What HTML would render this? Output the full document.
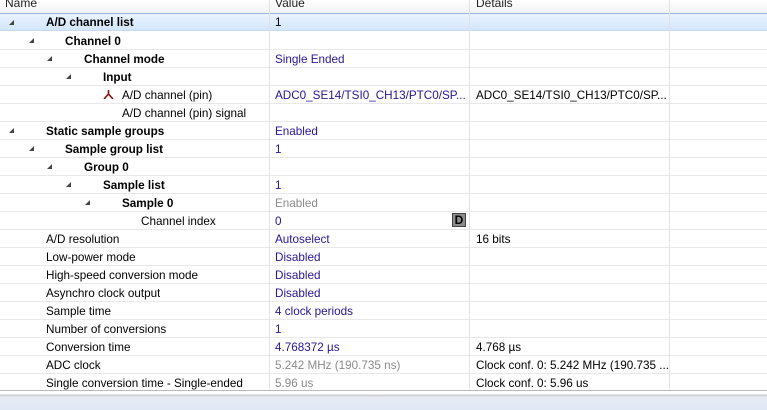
<!DOCTYPE html><html><head><style>
body{margin:0;width:767px;height:409px;overflow:hidden;background:#fff;font-family:"Liberation Sans",sans-serif;font-size:11.7px;color:#000;position:relative}
.h{position:absolute;top:0;left:0;width:767px;height:13px;background:linear-gradient(#fff,#f1f2f4);border-bottom:1px solid #d5d5d5}
.h span{position:absolute;top:-4px;font-size:12px;color:#222}
.vl{position:absolute;top:0;width:1px;height:391px;background:#e3e3e3}
.r{position:absolute;left:0;width:767px;height:17px;border-bottom:1px solid #e8e8e8}
.r span{position:absolute;top:2px;line-height:16px;white-space:nowrap;overflow:hidden}
.b{font-weight:bold}
.v{color:#2a1496}
.g{color:#8a8a8a}
.t{position:absolute;top:6px;width:0;height:0;border-left:5px solid transparent;border-bottom:5px solid #444}
.sel{background:linear-gradient(#eaf3ff,#d4e6fc);border-top:1px solid #99b4d8;border-bottom:1px solid #c7d9ef;height:16px}
.sel span{top:1px}
.D{position:absolute;left:452px;top:1px;width:14px;height:14px;background:#8c8c8c;border:1px solid #444;box-sizing:border-box;font-weight:bold;font-size:12px;line-height:12px;text-align:center;color:#000}
.bot{position:absolute;left:0;top:390px;width:767px;height:19px;border-top:1px solid #b9b9b9;background:linear-gradient(#fff 0,#fff 3px,#c9c9c9 4px,#e6eaf4 6px,#e1e8f5 19px)}
</style></head><body>
<div class="h"><span style="left:5px">Name</span><span style="left:275px">Value</span><span style="left:476px">Details</span></div>

<div class="r sel" style="top:13px"><i class="t" style="left:9px"></i><span class="b" style="left:46px">A/D channel list</span><span style="left:275px">1</span></div>
<div class="r" style="top:32px"><i class="t" style="left:29px"></i><span class="b" style="left:65px">Channel 0</span></div>
<div class="r" style="top:50px"><i class="t" style="left:47px"></i><span class="b" style="left:84px">Channel mode</span><span class="v" style="left:275px">Single Ended</span></div>
<div class="r" style="top:68px"><i class="t" style="left:66px"></i><span class="b" style="left:103px">Input</span></div>
<div class="r" style="top:86px"><svg style="position:absolute;left:103px;top:4px" width="11" height="9"><path d="M5.5 0V4M5.5 4L1 9M5.5 4L10 9" stroke="#8b1010" stroke-width="1.6" fill="none"/></svg><span style="left:122px">A/D channel (pin)</span><span class="v" style="left:275px;max-width:192px">ADC0_SE14/TSI0_CH13/PTC0/SP...</span><span style="left:476px;max-width:192px">ADC0_SE14/TSI0_CH13/PTC0/SP...</span></div>
<div class="r" style="top:104px"><span style="left:122px">A/D channel (pin) signal</span></div>
<div class="r" style="top:122px"><i class="t" style="left:9px"></i><span class="b" style="left:46px">Static sample groups</span><span class="v" style="left:275px">Enabled</span></div>
<div class="r" style="top:140px"><i class="t" style="left:29px"></i><span class="b" style="left:65px">Sample group list</span><span class="v" style="left:275px">1</span></div>
<div class="r" style="top:158px"><i class="t" style="left:47px"></i><span class="b" style="left:84px">Group 0</span></div>
<div class="r" style="top:176px"><i class="t" style="left:66px"></i><span class="b" style="left:103px">Sample list</span><span class="v" style="left:275px">1</span></div>
<div class="r" style="top:194px"><i class="t" style="left:85px"></i><span class="b" style="left:122px">Sample 0</span><span class="g" style="left:275px">Enabled</span></div>
<div class="r" style="top:212px"><span style="left:141px">Channel index</span><span class="v" style="left:275px">0</span><div class="D">D</div></div>
<div class="r" style="top:230px"><span style="left:46px">A/D resolution</span><span class="v" style="left:275px">Autoselect</span><span style="left:476px">16 bits</span></div>
<div class="r" style="top:248px"><span style="left:46px">Low-power mode</span><span class="v" style="left:275px">Disabled</span></div>
<div class="r" style="top:266px"><span style="left:46px">High-speed conversion mode</span><span class="v" style="left:275px">Disabled</span></div>
<div class="r" style="top:284px"><span style="left:46px">Asynchro clock output</span><span class="v" style="left:275px">Disabled</span></div>
<div class="r" style="top:302px"><span style="left:46px">Sample time</span><span class="v" style="left:275px">4 clock periods</span></div>
<div class="r" style="top:320px"><span style="left:46px">Number of conversions</span><span class="v" style="left:275px">1</span></div>
<div class="r" style="top:338px"><span style="left:46px">Conversion time</span><span class="v" style="left:275px">4.768372 µs</span><span style="left:476px">4.768 µs</span></div>
<div class="r" style="top:356px"><span style="left:46px">ADC clock</span><span class="g" style="left:275px">5.242 MHz (190.735 ns)</span><span style="left:476px;max-width:192px">Clock conf. 0: 5.242 MHz (190.735 ...</span></div>
<div class="r" style="top:374px"><span style="left:46px">Single conversion time - Single-ended</span><span class="g" style="left:275px">5.96 us</span><span style="left:476px">Clock conf. 0: 5.96 us</span></div>

<div class="vl" style="left:269px"></div><div class="vl" style="left:469px"></div><div class="vl" style="left:669px"></div>
<div class="bot"></div>
</body></html>
